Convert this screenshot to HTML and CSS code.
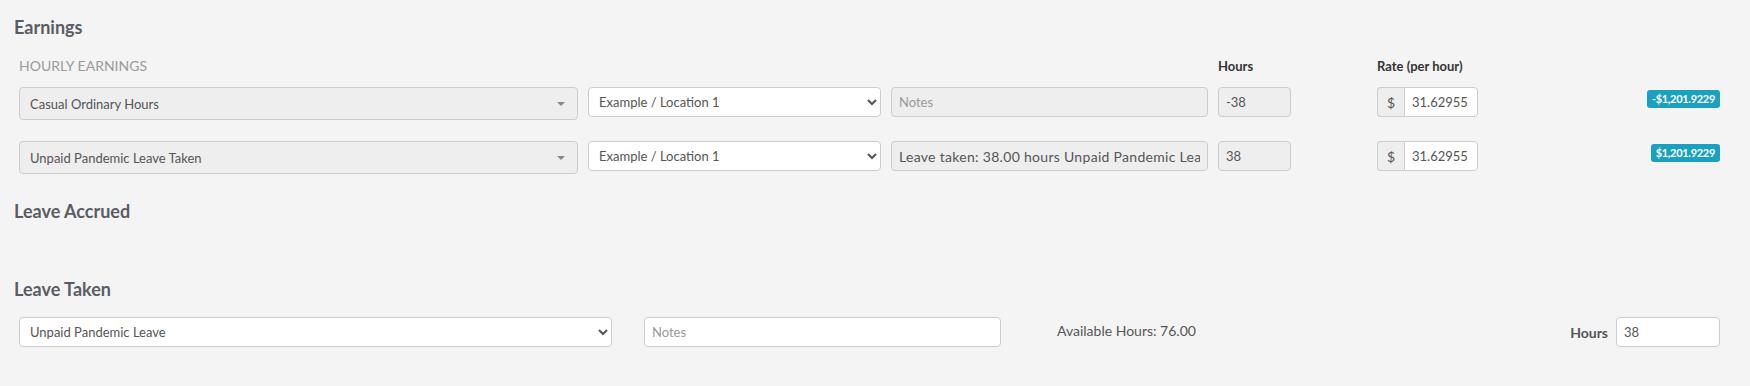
FILE: index.html
```html
<!DOCTYPE html>
<html lang="en">
<head>
    <meta charset="UTF-8">
    <title>Pay Run - Earnings</title>
    <link rel="stylesheet" href="styles.css">
</head>
<body>
    <div class="page">
        <h2 class="section-title">Earnings</h2>

        <div class="earn-row earn-head">
            <div class="sub-title">Hourly Earnings</div>
            <div></div>
            <div></div>
            <div class="col-label">Hours</div>
            <div class="rate-cell"><div class="col-label rate">Rate (per hour)</div></div>
            <div></div>
        </div>

        <div class="earn-list">
            <div class="earn-row">
                <div class="picker">
                    <span>Casual Ordinary Hours</span>
                    <span class="caret"></span>
                </div>
                <select class="field">
                    <option>Example / Location 1</option>
                </select>
                <input class="field" type="text" placeholder="Notes" readonly>
                <input class="field" type="text" value="-38" readonly>
                <div class="rate-cell">
                    <div class="rate input-group">
                        <span class="addon">$</span>
                        <input class="field" type="text" value="31.62955">
                    </div>
                </div>
                <span class="amount">-$1,201.9229</span>
            </div>

            <div class="earn-row">
                <div class="picker">
                    <span>Unpaid Pandemic Leave Taken</span>
                    <span class="caret"></span>
                </div>
                <select class="field">
                    <option>Example / Location 1</option>
                </select>
                <input class="field note-text" type="text" value="Leave taken: 38.00 hours Unpaid Pandemic Leave" readonly>
                <input class="field" type="text" value="38" readonly>
                <div class="rate-cell">
                    <div class="rate input-group">
                        <span class="addon">$</span>
                        <input class="field" type="text" value="31.62955">
                    </div>
                </div>
                <span class="amount">$1,201.9229</span>
            </div>
        </div>

        <h2 class="section-title accrued">Leave Accrued</h2>

        <h2 class="section-title taken">Leave Taken</h2>

        <div class="leave-row">
            <select class="field leave-type">
                <option>Unpaid Pandemic Leave</option>
            </select>
            <input class="field leave-notes" type="text" placeholder="Notes">
            <span class="available">Available Hours: 76.00</span>
            <label class="hours-group">
                <span>Hours</span>
                <input class="field" type="text" value="38">
            </label>
        </div>
    </div>
</body>
</html>
```

FILE: styles.css
```css
body {
    margin: 0;
    background: #f4f4f4;
    font-family: Lato, "Open Sans", Arial, sans-serif;
    color: #555;
}
.page {
    padding: 17px 30px 0 14px;
}
.section-title {
    margin: 0;
    font-size: 18px;
    line-height: 20px;
    font-weight: 700;
    color: #595d63;
}
.earn-row {
    display: grid;
    grid-template-columns: 559px 293px 317px 73px 177px 1fr;
    column-gap: 10px;
    padding-left: 5px;
    align-items: start;
}
.earn-head {
    margin-top: 20px;
    line-height: 18px;
}
.sub-title {
    font-size: 14px;
    text-transform: uppercase;
    color: #9a9a9a;
}
.col-label {
    font-size: 13px;
    font-weight: 700;
    color: #333;
}
.earn-list {
    display: flex;
    flex-direction: column;
    gap: 21px;
    margin-top: 12px;
}
.field {
    box-sizing: border-box;
    height: 30px;
    margin: 0;
    padding: 0 7px;
    border: 1px solid #ccc;
    border-radius: 4px;
    background: #fff;
    font-family: Lato, "Open Sans", Arial, sans-serif;
    font-size: 13px;
    color: #555;
    outline: none;
    min-width: 0;
    width: 100%;
}
.field::placeholder {
    color: #999;
}
.field[readonly] {
    background: #eee;
}
.note-text {
    font-size: 14px;
    letter-spacing: 0.3px;
}
select.field {
    padding: 0 6px;
}
.picker {
    box-sizing: border-box;
    height: 33px;
    display: flex;
    align-items: center;
    justify-content: space-between;
    padding: 0 12px 0 10px;
    border: 1px solid #ccc;
    border-radius: 4px;
    background: #eee;
    font-size: 13px;
    color: #555;
}
.caret {
    width: 0;
    height: 0;
    border-left: 4px solid transparent;
    border-right: 4px solid transparent;
    border-top: 4px solid #888;
}
.rate-cell {
    display: flex;
    justify-content: flex-end;
}
.rate {
    width: 101px;
}
.input-group {
    display: flex;
}
.addon {
    box-sizing: border-box;
    flex: none;
    width: 27px;
    height: 30px;
    display: flex;
    align-items: center;
    justify-content: center;
    border: 1px solid #ccc;
    border-right: none;
    border-radius: 4px 0 0 4px;
    background: #eee;
    font-size: 14px;
}
.input-group .field {
    border-radius: 0 4px 4px 0;
}
.amount {
    justify-self: end;
    margin-top: 3px;
    padding: 0 5px;
    border-radius: 3px;
    background: #1aa1c0;
    color: #fff;
    font-size: 11px;
    line-height: 18px;
    font-weight: 700;
    letter-spacing: -0.3px;
}
.accrued {
    margin-top: 27px;
}
.taken {
    margin-top: 58px;
}
.leave-row {
    display: flex;
    align-items: center;
    margin-top: 18px;
    padding-left: 5px;
}
.leave-type {
    width: 593px;
}
.leave-notes {
    width: 357px;
    margin-left: 32px;
}
.available {
    margin-left: 56px;
    margin-top: -4px;
    font-size: 14px;
}
.hours-group {
    margin-left: auto;
    display: flex;
    align-items: center;
    gap: 8px;
    font-size: 14px;
    font-weight: 700;
}
.hours-group .field {
    width: 104px;
}
```
